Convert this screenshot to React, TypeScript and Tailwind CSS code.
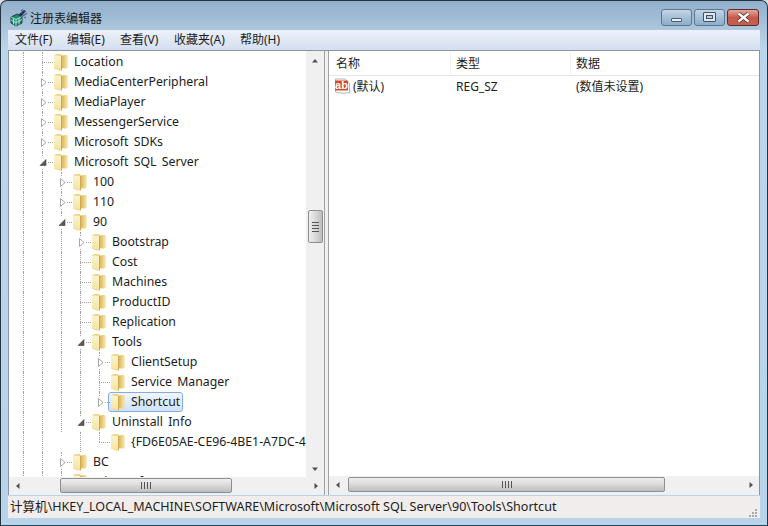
import React from "react";

type Row = {
  label: string;
  level: number;
  exp?: "open" | "closed";
  guides: boolean[];
  half?: boolean;
  selected?: boolean;
};

const rows: Row[] = [
  { label: "Location", level: 1, guides: [true] },
  { label: "MediaCenterPeripheral", level: 1, exp: "closed", guides: [true] },
  { label: "MediaPlayer", level: 1, exp: "closed", guides: [true] },
  { label: "MessengerService", level: 1, exp: "closed", guides: [true] },
  { label: "Microsoft SDKs", level: 1, exp: "closed", guides: [true] },
  { label: "Microsoft SQL Server", level: 1, exp: "open", guides: [true] },
  { label: "100", level: 2, exp: "closed", guides: [true, true] },
  { label: "110", level: 2, exp: "closed", guides: [true, true] },
  { label: "90", level: 2, exp: "open", guides: [true, true] },
  { label: "Bootstrap", level: 3, exp: "closed", guides: [true, true, true] },
  { label: "Cost", level: 3, guides: [true, true, true] },
  { label: "Machines", level: 3, guides: [true, true, true] },
  { label: "ProductID", level: 3, guides: [true, true, true] },
  { label: "Replication", level: 3, guides: [true, true, true] },
  { label: "Tools", level: 3, exp: "open", guides: [true, true, true] },
  { label: "ClientSetup", level: 4, exp: "closed", guides: [true, true, true, true] },
  { label: "Service Manager", level: 4, guides: [true, true, true, true] },
  { label: "Shortcut", level: 4, exp: "closed", guides: [true, true, true, true], half: true, selected: true },
  { label: "Uninstall Info", level: 3, exp: "open", guides: [true, true, true], half: true },
  { label: "{FD6E05AE-CE96-4BE1-A7DC-4D6F2B7A0C11}", level: 4, guides: [true, true, false, true], half: true },
  { label: "BC", level: 2, exp: "closed", guides: [true, true] },
  { label: "Microsoft", level: 2, exp: "closed", guides: [true, true] },
];

function Folder() {
  return (
    <svg width="15" height="18" viewBox="0 0 15 18" className="shrink-0">
      <defs>
        <linearGradient id="fa" x1="0" y1="0" x2="0" y2="1">
          <stop offset="0" stopColor="#fbf4cf" />
          <stop offset="1" stopColor="#f4e3a0" />
        </linearGradient>
        <linearGradient id="fb" x1="0" y1="0" x2="1" y2="0">
          <stop offset="0" stopColor="#dcb85c" />
          <stop offset="1" stopColor="#f5e3a4" />
        </linearGradient>
      </defs>
      <path d="M1 2.5 L3 1 H8 L8.5 2 H13.5 L14.5 3 V14.5 L13 15.5 H9 L8 17.5 H6 L1 15.5 Z" fill="#ecd68a" />
      <path d="M1 2.5 L8 3 V17 L1 15 Z" fill="url(#fa)" />
      <path d="M9 3 H14 V15 H9 Z" fill="url(#fb)" />
      <path d="M8.5 3 V17.5" stroke="#cfa850" strokeWidth="1" />
    </svg>
  );
}

function Expander({ kind }: { kind: "open" | "closed" }) {
  return (
    <svg width="9" height="11" viewBox="0 0 9 11" className="absolute left-[-3px] top-[5px] bg-white">
      {kind === "closed" ? (
        <path d="M2.5 1.5 L7 5.5 L2.5 9.5 Z" fill="#fff" stroke="#a6a6a6" />
      ) : (
        <path d="M1 8.5 L7 8.5 L7 2.5 Z" fill="#595959" stroke="#404040" strokeWidth="0.6" />
      )}
    </svg>
  );
}

function TreeRow({ row }: { row: Row }) {
  return (
    <div className="flex h-5 shrink-0 items-stretch whitespace-nowrap text-[12.3px] [word-spacing:2px]">
      <div className="w-[14px] shrink-0" />
      {Array.from({ length: row.level }).map((_, i) => (
        <div key={i} className="w-[19px] shrink-0">
          {row.guides[i] !== false ? (
            <div className="h-full w-px border-l border-dotted border-[#a0a0a0]" />
          ) : null}
        </div>
      ))}
      <div className="relative w-[11px] shrink-0">
        <div className={`absolute left-0 top-0 w-px border-l border-dotted border-[#a0a0a0] ${row.half ? "h-[10px]" : "h-full"}`} />
        <div className="absolute left-0 right-0 top-[10px] h-px border-t border-dotted border-[#a0a0a0]" />
        {row.exp ? <Expander kind={row.exp} /> : null}
      </div>
      <div
        className={`ml-[-2px] flex items-center gap-[6px] rounded-[3px] border pl-px pr-[2px] ${
          row.selected
            ? "border-[#84acdd] bg-gradient-to-b from-[#f0f6fd] to-[#cfe2f8]"
            : "border-transparent"
        }`}
      >
        <Folder />
        <span className="text-[#1c1c1c]">{row.label}</span>
      </div>
    </div>
  );
}

function Arrow({ dir }: { dir: "up" | "down" | "left" | "right" }) {
  const d = {
    up: "M1 5.5 L4 2 L7 5.5 Z",
    down: "M1 2.5 L4 6 L7 2.5 Z",
    left: "M5.5 1 L2 4 L5.5 7 Z",
    right: "M2.5 1 L6 4 L2.5 7 Z",
  }[dir];
  return (
    <svg width="8" height="8" viewBox="0 0 8 8">
      <path d={d} fill="#505050" />
    </svg>
  );
}

function Grip({ vertical }: { vertical: boolean }) {
  return (
    <div className={`flex gap-[2px] ${vertical ? "flex-col" : "flex-row"}`}>
      {[0, 1, 2, 3].map((i) => (
        <div key={i} className={`${vertical ? "h-px w-[7px]" : "h-[7px] w-px"} bg-[#555]`} />
      ))}
    </div>
  );
}

function HBar({ before, thumb }: { before: number; thumb: number }) {
  return (
    <div className="flex h-[17px] shrink-0 items-center bg-[#f0f0f0]">
      <div className="flex w-[17px] shrink-0 items-center justify-center"><Arrow dir="left" /></div>
      <div className="flex min-w-0 flex-1 items-center">
        <div className="shrink-0" style={{ width: before }} />
        <div
          className="flex h-[15px] shrink-0 items-center justify-center rounded-[2px] border border-[#8f8f8f] bg-gradient-to-b from-[#efefef] via-[#d9d9d9] to-[#bdbdbd]"
          style={{ width: thumb }}
        >
          <Grip vertical={false} />
        </div>
      </div>
      <div className="flex w-[17px] shrink-0 items-center justify-center"><Arrow dir="right" /></div>
    </div>
  );
}

function Regedit() {
  return (
    <svg width="18" height="18" viewBox="0 0 18 18" className="shrink-0">
      <path d="M1 8 L7 5 L12 7 L12 14 L6 17 L1 14 Z" fill="#1f8a70" stroke="#1b3440" strokeWidth="0.9" />
      <path d="M1 8 L6 10.5 L12 7.5 M6 10.5 V17 M3.5 9.2 V15.5 M9 9 V15.5 M1 11 L6 13.5 L12 10.5" stroke="#c8f2e0" strokeWidth="0.8" fill="none" />
      <path d="M8 6 L14 1 L16 2 L11 8 Z" fill="#24384e" />
      <path d="M13 7 L17 4 M11 2 L13 0.5 M14 9 L16 8" stroke="#5a5f98" strokeWidth="1.2" />
    </svg>
  );
}

function AbIcon() {
  return (
    <svg width="17" height="17" viewBox="0 0 17 17" className="shrink-0">
      <path d="M1.5 1 H11 L15.5 5 V15 C13 13.5 11 16.5 8 15 C5.5 14 4 15.5 1.5 14 Z" fill="#fff" stroke="#b5b5b5" />
      <rect x="1" y="2.5" width="13" height="10" rx="0.8" fill="#d04a26" />
      <text x="7.5" y="10.8" textAnchor="middle" fontSize="11" fontWeight="700" fill="#fff" fontFamily="Liberation Sans, sans-serif">ab</text>
    </svg>
  );
}

function CapBtn({ kind }: { kind: "min" | "max" | "close" }) {
  const base =
    kind === "close"
      ? "w-[32px] border-[#5e2b2b] bg-gradient-to-b from-[#e2a79c] via-[#c9594b] to-[#c4604f]"
      : "w-[31px] border-[#5e7890] bg-gradient-to-b from-[#c2d6e8] via-[#a6bfd6] to-[#8caec9]";
  return (
    <div className={`flex h-[17px] items-center justify-center rounded-[3px] border ${base}`}>
      {kind === "min" && <div className="mt-[5px] h-[4px] w-[11px] rounded-[1px] border border-[#4b5d70] bg-[#e8eef4]" />}
      {kind === "max" && (
        <div className="flex h-[10px] w-[13px] items-center justify-center rounded-[1px] border border-[#3f5062] bg-[#dfe8f0]">
          <div className="h-[4px] w-[7px] border border-[#3f5062] bg-[#b9cbdc]" />
        </div>
      )}
      {kind === "close" && (
        <svg width="15" height="11" viewBox="0 0 15 11">
          <path d="M2.5 1.5 L12.5 9.5 M12.5 1.5 L2.5 9.5" stroke="#3d2020" strokeWidth="3.6" />
          <path d="M2.5 1.5 L12.5 9.5 M12.5 1.5 L2.5 9.5" stroke="#ffffff" strokeWidth="2.4" />
        </svg>
      )}
    </div>
  );
}

export default function App() {
  return (
    <div className="h-[526px] w-[768px] overflow-hidden bg-[#d9dde2] font-['Noto_Sans','Noto_Sans_CJK_SC',sans-serif] text-[12px] leading-none text-[#1c1c1c]">
      <div className="flex h-full flex-col rounded-t-[7px] border border-[#24343f] border-b-[#1f4a5a] bg-gradient-to-b from-[#92afca] via-[#bdd5ea] via-[9%] to-[#b8d3ea]">
        <div className="flex h-[29px] shrink-0 items-center justify-between pl-[9px] pr-[8px]">
          <div className="flex items-center gap-px pt-[5px]">
            <Regedit />
            <span className="pl-px pt-[2px] text-[12px] text-[#151a20]">注册表编辑器</span>
          </div>
          <div className="flex gap-[2px] pt-[3px]">
            <CapBtn kind="min" />
            <CapBtn kind="max" />
            <CapBtn kind="close" />
          </div>
        </div>
        <div className="mx-[7px] flex h-[20px] shrink-0 items-center bg-gradient-to-b from-[#ecf1f9] to-[#d5dff0] pl-[7px]">
          <span className="w-[52px] shrink-0">文件(F)</span>
          <span className="w-[53px] shrink-0">编辑(E)</span>
          <span className="w-[54px] shrink-0">查看(V)</span>
          <span className="w-[66px] shrink-0">收藏夹(A)</span>
          <span>帮助(H)</span>
        </div>
        <div className="mx-[7px] flex h-[445px] shrink-0 border-x border-t border-[#8a95a0] bg-[#f0f0f0]">
          <div className="flex w-[315px] shrink-0 flex-col bg-white">
            <div className="flex h-[426px] shrink-0">
              <div className="flex w-[297px] shrink-0 flex-col overflow-hidden bg-white pt-px">
                {rows.map((r, i) => (
                  <TreeRow key={i} row={r} />
                ))}
              </div>
              <div className="flex w-[18px] shrink-0 flex-col items-center bg-[#f0f0f0]">
                <div className="flex h-[19px] shrink-0 items-center justify-center"><Arrow dir="up" /></div>
                <div className="h-[140px] shrink-0" />
                <div className="flex h-[33px] w-[15px] shrink-0 items-center justify-center rounded-[2px] border border-[#8f8f8f] bg-gradient-to-r from-[#efefef] via-[#d9d9d9] to-[#bdbdbd]">
                  <Grip vertical />
                </div>
                <div className="flex-1" />
                <div className="flex h-[17px] shrink-0 items-center justify-center"><Arrow dir="down" /></div>
              </div>
            </div>
            <HBar before={34} thumb={172} />
            <div className="flex-1 bg-[#f0f0f0]" />
          </div>
          <div className="w-[5px] shrink-0 border-x border-[#a0a0a0] bg-[#f0f0f0]" />
          <div className="flex min-w-0 flex-1 flex-col bg-white">
            <div className="flex h-[25px] shrink-0 items-center border-b border-[#e5e5e5] bg-white pt-px">
              <div className="flex h-full w-[122px] shrink-0 items-center border-r border-[#f2f2f2] pl-[7px]">名称</div>
              <div className="flex h-full w-[120px] shrink-0 items-center border-r border-[#f2f2f2] pl-[5px]">类型</div>
              <div className="flex h-full flex-1 items-center pl-[5px]">数据</div>
            </div>
            <div className="flex h-[21px] shrink-0 items-center">
              <div className="flex w-[122px] shrink-0 items-center gap-[2px] pl-[5px]">
                <AbIcon />
                <span>(默认)</span>
              </div>
              <div className="w-[120px] shrink-0 pl-[5px]">REG_SZ</div>
              <div className="flex-1 pl-[5px]">(数值未设置)</div>
            </div>
            <div className="flex-1" />
            <HBar before={2} thumb={317} />
            <div className="h-[2px] shrink-0 bg-[#f0f0f0]" />
          </div>
        </div>
        <div className="mx-[7px] mt-[1px] flex h-[22px] shrink-0 items-center justify-between bg-[#f1edec] px-[2px] text-[12.55px]">
          <span>计算机\HKEY_LOCAL_MACHINE\SOFTWARE\Microsoft\Microsoft SQL Server\90\Tools\Shortcut</span>
          <svg width="11" height="11" viewBox="0 0 11 11" className="self-end">
            <g fill="#a9a9a9">
              <rect x="8" y="2" width="2" height="2" />
              <rect x="5" y="5" width="2" height="2" />
              <rect x="8" y="5" width="2" height="2" />
              <rect x="2" y="8" width="2" height="2" />
              <rect x="5" y="8" width="2" height="2" />
              <rect x="8" y="8" width="2" height="2" />
            </g>
          </svg>
        </div>
      </div>
    </div>
  );
}
